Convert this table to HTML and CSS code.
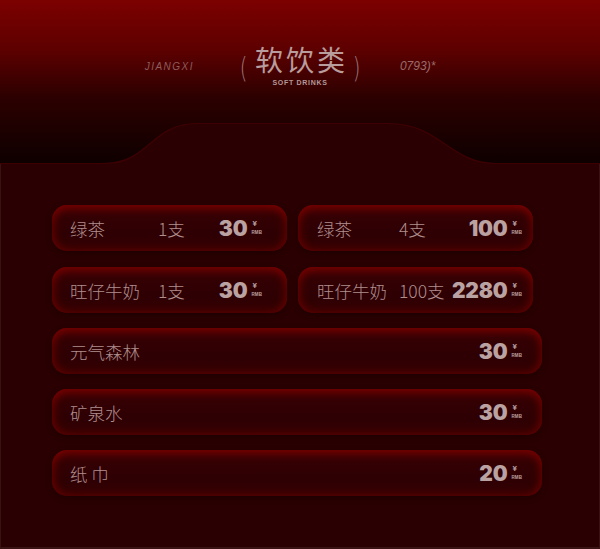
FILE: index.html
```html
<!DOCTYPE html>
<html lang="zh-CN">
<head>
<meta charset="utf-8">
<title>软饮类</title>
<link rel="stylesheet" href="styles.css">
</head>
<body>
<div class="page">
  <header class="hero">
    <svg class="hero-bg" width="600" height="166" viewBox="0 0 600 166" aria-hidden="true">
      <defs>
        <linearGradient id="hg" x1="0" y1="0" x2="0" y2="1">
          <stop offset="0" stop-color="#7c0000"/>
          <stop offset="0.3" stop-color="#5e0000"/>
          <stop offset="0.6" stop-color="#2c0000"/>
          <stop offset="1" stop-color="#0e0000"/>
        </linearGradient>
      </defs>
      <path d="M0 0 H600 V163 H496 C450 163 440 123 388 123 H198 C150 123 150 163 104 163 H0 Z" fill="url(#hg)"/>
      <path d="M0 163.5 H104 C150 163.5 150 123.5 198 123.5 H388 C440 123.5 450 163.5 496 163.5 H600" fill="none" stroke="#3e0003" stroke-width="1.2"/>
    </svg>
    <div class="title-row">
      <span class="side side-left">JIANGXI</span>
      <div class="title">
        <span class="paren">(</span>
        <div class="title-main">
          <span class="title-cn">软饮类</span>
          <span class="title-en">SOFT DRINKS</span>
        </div>
        <span class="paren">)</span>
      </div>
      <span class="side side-right">0793)*</span>
    </div>
  </header>

  <main class="menu">
    <div class="pair-grid">
      <div class="card card-l">
        <span class="name">绿茶</span><span class="qty">1支</span>
        <span class="price"><b class="num">30</b><span class="unit"><i>¥</i><i class="rmb">RMB</i></span></span>
      </div>
      <div class="card card-r">
        <span class="name">绿茶</span><span class="qty">4支</span>
        <span class="price"><b class="num">100</b><span class="unit"><i>¥</i><i class="rmb">RMB</i></span></span>
      </div>
      <div class="card card-l">
        <span class="name">旺仔牛奶</span><span class="qty">1支</span>
        <span class="price"><b class="num">30</b><span class="unit"><i>¥</i><i class="rmb">RMB</i></span></span>
      </div>
      <div class="card card-r">
        <span class="name">旺仔牛奶</span><span class="qty">100支</span>
        <span class="price"><b class="num">2280</b><span class="unit"><i>¥</i><i class="rmb">RMB</i></span></span>
      </div>
    </div>
    <div class="card card-wide">
      <span class="name">元气森林</span>
      <span class="price"><b class="num">30</b><span class="unit"><i>¥</i><i class="rmb">RMB</i></span></span>
    </div>
    <div class="card card-wide">
      <span class="name">矿泉水</span>
      <span class="price"><b class="num">30</b><span class="unit"><i>¥</i><i class="rmb">RMB</i></span></span>
    </div>
    <div class="card card-wide">
      <span class="name">纸 巾</span>
      <span class="price"><b class="num">20</b><span class="unit"><i>¥</i><i class="rmb">RMB</i></span></span>
    </div>
  </main>
</div>
</body>
</html>
```
FILE: styles.css
```css
html, body {
  margin: 0;
  padding: 0;
  background: #2a0002;
}

.page {
  position: relative;
  width: 600px;
  height: 549px;
  overflow: hidden;
  background: #2a0002;
  box-shadow: inset 1px 0 0 #3a1212, inset -1px 0 0 #3a1212, inset 0 -2px 0 #3a1414;
  font-family: "Noto Sans CJK SC", "Noto Sans", sans-serif;
}

.hero {
  position: relative;
  height: 163px;
  padding-top: 45px;
  box-sizing: border-box;
}

.hero-bg {
  position: absolute;
  left: 0;
  top: 0;
  display: block;
}

.title-row {
  position: relative;
  display: grid;
  grid-template-columns: 1fr auto 1fr;
  align-items: center;
}

.side {
  font-family: "Liberation Sans", Arial, sans-serif;
  font-style: italic;
  font-size: 10px;
  color: #8e5c5c;
  margin-top: 0;
}

.side-left {
  justify-self: end;
  margin-right: 44px;
  letter-spacing: 1.5px;
}

.side-right {
  justify-self: start;
  margin-left: 38px;
  font-size: 12px;
  color: #9a6a6a;
}

.title {
  display: flex;
  align-items: center;
  gap: 6px;
}

.paren {
  font-family: "DejaVu Sans", sans-serif;
  font-weight: 200;
  font-size: 28px;
  line-height: 30px;
  color: #9c7878;
  transform: scaleX(0.7);
  margin-top: 6px;
}

.title-main {
  display: flex;
  flex-direction: column;
  align-items: center;
}

.title-cn {
  font-size: 28px;
  line-height: 28px;
  font-weight: 400;
  color: #b99d9d;
  letter-spacing: 3px;
  margin-right: -3px;
}

.title-en {
  font-family: "Liberation Sans", Arial, sans-serif;
  font-weight: 700;
  font-size: 7px;
  line-height: 8px;
  letter-spacing: 0.7px;
  color: #b39898;
  margin-top: 6px;
}

.menu {
  padding: 42px 0 0 52px;
  display: flex;
  flex-direction: column;
  gap: 15px;
}

.pair-grid {
  width: 481px;
  display: grid;
  grid-template-columns: 235px 235px;
  column-gap: 11px;
  row-gap: 16px;
}

.card {
  height: 46px;
  box-sizing: border-box;
  border-radius: 15px;
  background: linear-gradient(#380004, #2e0003 60%, #330003);
  box-shadow:
    inset 0 9px 9px -5px #760000,
    inset 9px 0 10px -7px #640000,
    inset -9px 0 10px -7px #640000,
    inset 0 -7px 8px -5px #560000,
    0 2px 6px rgba(0, 0, 0, 0.3);
  display: flex;
  align-items: center;
  color: #b08e8e;
  font-size: 17.5px;
  font-weight: 300;
}

.card-l {
  padding: 0 25px 0 18px;
}

.card-r {
  padding: 0 11px 0 19px;
}

.card-wide {
  width: 490px;
  padding: 0 20px 0 18px;
}

.card-l .name {
  min-width: 88px;
}

.card-r .name {
  min-width: 82px;
}

.qty {
  white-space: nowrap;
}

.price {
  margin-left: auto;
  display: flex;
  align-items: center;
  gap: 4px;
}

.num {
  font-family: Inter, "Liberation Sans", sans-serif;
  font-weight: 900;
  font-size: 21px;
  letter-spacing: -0.2px;
  color: #bba2a2;
  line-height: 1;
}

.unit {
  display: flex;
  flex-direction: column;
  align-items: flex-start;
  font-family: "Liberation Sans", Arial, sans-serif;
  font-style: normal;
  color: #bba2a2;
  line-height: 1;
}

.unit i {
  font-style: normal;
  font-size: 8px;
  font-weight: 700;
  margin-left: 1px;
}

.unit .rmb {
  font-size: 4.5px;
  margin-top: 3px;
  margin-left: 0;
  letter-spacing: 0.1px;
}
```
